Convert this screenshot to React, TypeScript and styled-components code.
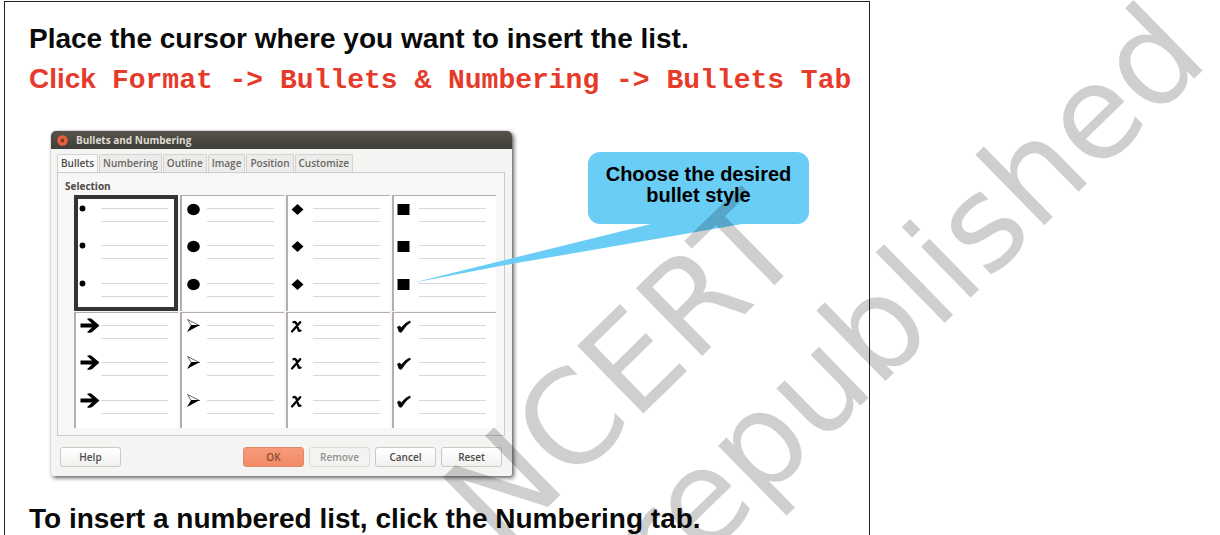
import React, { useState } from "react";
import styled, { createGlobalStyle, css } from "styled-components";

const GlobalStyle = createGlobalStyle`
  * { box-sizing: border-box; }
  body { margin: 0; background: #fff; color: #000; }
`;

const sans = `"Liberation Sans", Arial, sans-serif`;
const mono = `"Liberation Mono", "Courier New", monospace`;
const ui = `"Open Sans", "Noto Sans", sans-serif`;

const Page = styled.div`
  position: relative;
  height: 100vh;
  overflow: hidden;
  padding: 1px 4px 0;
  font-family: ${sans};
`;

const Slide = styled.main`
  width: calc(71% + 5px);
  min-width: 866px;
  min-height: 100%;
  padding: 17px 0 0 24px;
  border: 1px solid #222;
  border-bottom: 0;
`;

const Instruction = styled.p<{ $accent?: boolean }>`
  margin: 0;
  font-size: 28px;
  line-height: 40px;
  font-weight: 700;
  white-space: nowrap;
  color: ${(p) => (p.$accent ? "#e63a2a" : "#0a0a0a")};
`;

const MenuPath = styled.span`
  margin-left: 16px;
  font-family: ${mono};
`;

const Demo = styled.div`
  display: flex;
  align-items: flex-start;
  gap: 76px;
  margin: 30px 0 23px 22px;
`;

const Dialog = styled.section`
  flex: 0 0 461px;
  border-radius: 5px 5px 2px 2px;
  background: #f4f4f2;
  box-shadow: 2px 2px 4px rgba(0, 0, 0, 0.6), 0 0 2px rgba(0, 0, 0, 0.25);
  font-family: ${ui};
  color: #4c4a48;
`;

const TitleBar = styled.header`
  display: flex;
  align-items: center;
  gap: 8px;
  height: 18px;
  padding: 0 6px;
  border-radius: 5px 5px 0 0;
  background: linear-gradient(#57534c, #403e39);
  color: #dfdbd2;
`;

const CloseButton = styled.button`
  display: flex;
  width: 11px;
  height: 11px;
  padding: 0;
  border: 0;
  background: none;
`;

const Title = styled.h2`
  margin: 0;
  font-size: 10px;
  line-height: 18px;
  font-weight: 700;
`;

const DialogBody = styled.div`
  padding: 5px 7px 9px 6px;
`;

const TabList = styled.div`
  display: flex;
  align-items: flex-end;
  gap: 1px;
`;

const Tab = styled.button<{ $active: boolean }>`
  height: 18px;
  padding: 0 3px;
  border: 1px solid #d6d2d0;
  border-bottom: 0;
  border-radius: 2px 2px 0 0;
  background: ${(p) => (p.$active ? "#faf9f9" : "#ececea")};
  font-family: ${ui};
  font-size: 10px;
  line-height: 17px;
  font-weight: 600;
  color: ${(p) => (p.$active ? "#4c4a48" : "#6a6764")};
`;

const TabPanel = styled.div`
  padding: 4px 8px 7px 7px;
  border: 1px solid #cfcaca;
  background: #f8f7f7;
`;

const GroupLabel = styled.h3`
  margin: 0;
  font-size: 10px;
  line-height: 18px;
  font-weight: 700;
`;

const StyleGrid = styled.div`
  display: grid;
  grid-template-columns: repeat(4, 1fr);
  grid-auto-rows: 116px;
  gap: 1px 2px;
  margin-left: 9px;
`;

const StyleOption = styled.button<{ $selected: boolean }>`
  display: grid;
  grid-template-rows: repeat(3, 1fr);
  padding: 1px 10px 3px 0;
  border: 0;
  background: #fff;
  ${(p) =>
    p.$selected
      ? css`
          box-shadow: inset 0 0 0 4px #343434;
        `
      : css`
          box-shadow: inset 2px 1px 0 #b8adad;
        `}
`;

const PreviewItem = styled.span`
  display: flex;
  align-items: flex-start;
`;

const Mark = styled.svg`
  flex: 0 0 27px;
  width: 27px;
  height: 26px;
`;

const TextLines = styled.span`
  flex: 1;
  height: 14px;
  margin-top: 12px;
  border: solid #d8d8d8;
  border-width: 1px 0;
`;

const Actions = styled.div`
  display: flex;
  gap: 5px;
  margin-top: 11px;
  padding: 0 3px;
`;

const ActionButton = styled.button<{ $primary?: boolean; $pushed?: boolean }>`
  width: 61px;
  height: 20px;
  padding: 0;
  margin-right: ${(p) => (p.$pushed ? "auto" : "0")};
  border: 1px solid ${(p) => (p.$primary ? "#e08a6a" : "#cbc8c6")};
  border-radius: 3px;
  background: ${(p) =>
    p.$primary ? "linear-gradient(#f79b7b, #f28a66)" : "linear-gradient(#fff, #f1f1f0)"};
  font-family: ${ui};
  font-size: 10px;
  line-height: 18px;
  font-weight: 600;
  color: ${(p) => (p.$primary ? "#8a4a34" : "#4c4a48")};

  &:disabled {
    border-color: #dddad8;
    background: #f3f3f2;
    color: #949190;
  }
`;

const Callout = styled.aside`
  position: relative;
  flex: 0 0 221px;
  height: 72px;
  margin-top: 21px;
  padding-top: 12px;
  border-radius: 12px;
  background: #69cdf5;
  font-size: 20px;
  line-height: 21px;
  font-weight: 700;
  text-align: center;
  white-space: nowrap;
`;

const CalloutTail = styled.svg`
  position: absolute;
  left: -176px;
  top: 71px;
  width: 340px;
  height: 60px;
`;

const WatermarkLayer = styled.div`
  position: absolute;
  inset: 0;
  overflow: hidden;
  pointer-events: none;
`;

const Watermark = styled.span<{ $x: number; $y: number }>`
  position: absolute;
  left: ${(p) => p.$x}px;
  top: ${(p) => p.$y}px;
  transform-origin: 0 110px;
  transform: rotate(-44.4deg);
  font-family: "DejaVu Sans", sans-serif;
  font-size: 130px;
  line-height: 130px;
  white-space: nowrap;
  color: rgba(0, 0, 0, 0.19);
`;

const bulletStyles: { name: string; mark: React.ReactNode }[] = [
  { name: "Small circle", mark: <circle cx="8.5" cy="12.5" r="2.9" /> },
  { name: "Large circle", mark: <ellipse cx="13.5" cy="13.5" rx="6.3" ry="5.8" /> },
  { name: "Diamond", mark: <path d="M11.5 8l6 5.5-6 5.5-6-5.5z" /> },
  { name: "Square", mark: <path d="M5.5 8h12v11h-12z" /> },
  {
    name: "Arrow",
    mark: (
      <path d="M6.5 10.6h11.500L13 6c2-1 4-.8 5.400.5L25.500 12.500l-7 6.200c-1.400 1.200-3.500 1.400-5.500.5l5-4.600H6.500z" />
    ),
  },
  {
    name: "Arrowhead",
    mark: (
      <>
        <path d="M7.500 6.500L19.500 12.500H11.200z" fill="#fff" stroke="#444" strokeWidth=".8" />
        <path d="M20 12L7 19l4.200-7z" />
      </>
    ),
  },
  {
    name: "Cross",
    mark: (
      <path
        d="M7.500 9.200c1.200-.5 2.200-.2 2.700 1l2.300 6.600c.4 1.200 1 1.400 2 .8M14.200 9.200L6 18.500"
        fill="none"
        stroke="#000"
        strokeWidth="2.300"
        strokeLinecap="round"
      />
    ),
  },
  {
    name: "Tick",
    mark: (
      <path
        d="M5.500 14c1.500-1.200 3-.9 3.300.4l.3.900C11.300 12.200 14 9.600 17.600 8.200l1 .9c-3.800 2.700-6.600 6-8.600 9.500-1.200.9-2.600.9-3-.3z"
        stroke="#000"
        strokeWidth=".8"
      />
    ),
  },
];

const tabs = ["Bullets", "Numbering", "Outline", "Image", "Position", "Customize"];

function BulletsDialog() {
  const [tab, setTab] = useState("Bullets");
  const [selected, setSelected] = useState("Small circle");

  return (
    <Dialog role="dialog" aria-labelledby="dialog-title">
      <TitleBar>
        <CloseButton type="button" aria-label="Close">
          <svg width="11" height="11" viewBox="0 0 11 11">
            <circle cx="5.5" cy="5.5" r="5.2" fill="#e8603c" />
            <path d="M4 4l3 3M7 4L4 7" stroke="#6e2c1a" strokeWidth="1.3" />
          </svg>
        </CloseButton>
        <Title id="dialog-title">Bullets and Numbering</Title>
      </TitleBar>
      <DialogBody>
        <TabList role="tablist">
          {tabs.map((name) => (
            <Tab
              key={name}
              type="button"
              role="tab"
              aria-selected={tab === name}
              $active={tab === name}
              onClick={() => setTab(name)}
            >
              {name}
            </Tab>
          ))}
        </TabList>
        <TabPanel role="tabpanel">
          <GroupLabel>Selection</GroupLabel>
          <StyleGrid>
            {bulletStyles.map(({ name, mark }) => (
              <StyleOption
                key={name}
                type="button"
                aria-label={name}
                aria-pressed={selected === name}
                $selected={selected === name}
                onClick={() => setSelected(name)}
              >
                {[0, 1, 2].map((row) => (
                  <PreviewItem key={row}>
                    <Mark viewBox="0 0 27 26">{mark}</Mark>
                    <TextLines />
                  </PreviewItem>
                ))}
              </StyleOption>
            ))}
          </StyleGrid>
        </TabPanel>
        <Actions>
          <ActionButton type="button" $pushed>Help</ActionButton>
          <ActionButton type="button" $primary>OK</ActionButton>
          <ActionButton type="button" disabled>Remove</ActionButton>
          <ActionButton type="button">Cancel</ActionButton>
          <ActionButton type="button">Reset</ActionButton>
        </Actions>
      </DialogBody>
    </Dialog>
  );
}

export default function App() {
  return (
    <Page>
      <GlobalStyle />
      <Slide>
        <Instruction>Place the cursor where you want to insert the list.</Instruction>
        <Instruction $accent>
          Click<MenuPath>Format -&gt; Bullets &amp; Numbering -&gt; Bullets Tab</MenuPath>
        </Instruction>
        <Demo>
          <BulletsDialog />
          <Callout>
            Choose the desired
            <br />
            bullet style
            <CalloutTail viewBox="0 0 340 60" aria-hidden="true">
              <path d="M243 0L0 60L88 43L336 0z" fill="#69cdf5" />
            </CalloutTail>
          </Callout>
        </Demo>
        <Instruction>To insert a numbered list, click the Numbering tab.</Instruction>
      </Slide>
      <WatermarkLayer>
        <Watermark $x={500} $y={444}>NCERT</Watermark>
        <Watermark $x={666} $y={486}>republished</Watermark>
      </WatermarkLayer>
    </Page>
  );
}
